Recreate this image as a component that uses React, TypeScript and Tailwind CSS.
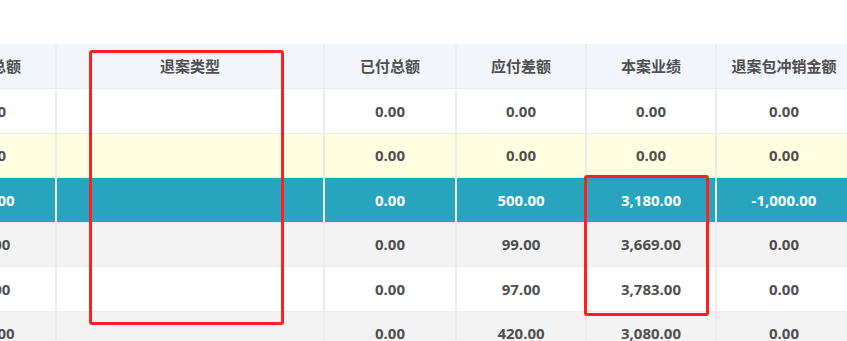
const columns = [
  { title: '应付总额', width: 'w-[130px]' },
  { title: '退案类型', width: 'w-[268px]' },
  { title: '已付总额', width: 'w-[132px]' },
  { title: '应付差额', width: 'w-[130px]' },
  { title: '本案业绩', width: 'w-[130px]' },
  { title: '退案包冲销金额', width: 'w-[136px]' },
]

const rows = [
  { bg: 'bg-white', text: 'text-[#4f4f4f]', cells: ['0.00', '', '0.00', '0.00', '0.00', '0.00'] },
  { bg: 'bg-[#fffee0]', text: 'text-[#4f4f4f]', cells: ['0.00', '', '0.00', '0.00', '0.00', '0.00'] },
  { bg: 'bg-[#29a4bf]', text: 'text-white', cells: ['500.00', '', '0.00', '500.00', '3,180.00', '-1,000.00'] },
  { bg: 'bg-[#f3f3f3]', text: 'text-[#4f4f4f]', cells: ['99.00', '', '0.00', '99.00', '3,669.00', '0.00'] },
  { bg: 'bg-white', text: 'text-[#4f4f4f]', cells: ['97.00', '', '0.00', '97.00', '3,783.00', '0.00'] },
  { bg: 'bg-[#f3f3f3]', text: 'text-[#4f4f4f]', cells: ['420.00', '', '0.00', '420.00', '3,080.00', '0.00'] },
]

export default function App() {
  return (
    <div className="relative h-[341px] w-[847px] overflow-hidden bg-white">
      <div className="pt-[44px]">
        <div className="-ml-[73px] w-max">
          {/* header */}
          <div className="flex h-[45px] border-b border-[#ebebeb] bg-[#f2f5fa]">
            {columns.map((col) => (
              <div
                key={col.title}
                className={`${col.width} flex items-center justify-center border-r-2 border-[#ebedf0] text-[15px] font-semibold text-[#4f4f4f] [font-family:'Noto_Sans_CJK_SC',sans-serif]`}
              >
                {col.title}
              </div>
            ))}
          </div>

          {rows.map((row, i) => (
            <div key={i} className={`flex h-[44.5px] border-b border-[#ececec] ${row.bg}`}>
              {row.cells.map((v, j) => (
                <div
                  key={j}
                  className={`${columns[j].width} flex items-center justify-center border-r-2 ${
                    row.bg === 'bg-[#29a4bf]' ? 'border-[#f2f2f2]' : 'border-[#ececec]'
                  } text-[15px] font-bold ${row.text} [font-family:'Open_Sans',sans-serif]`}
                >
                  {v}
                </div>
              ))}
            </div>
          ))}
        </div>
      </div>

      {/* annotation boxes */}
      <div className="absolute left-[89px] top-[50px] h-[275px] w-[195px] rounded-[3px] border-[3px] border-[#ff1f1f]" />
      <div className="absolute left-[584px] top-[175px] h-[141px] w-[125px] rounded-[3px] border-[3px] border-[#ff1f1f]" />
    </div>
  )
}
